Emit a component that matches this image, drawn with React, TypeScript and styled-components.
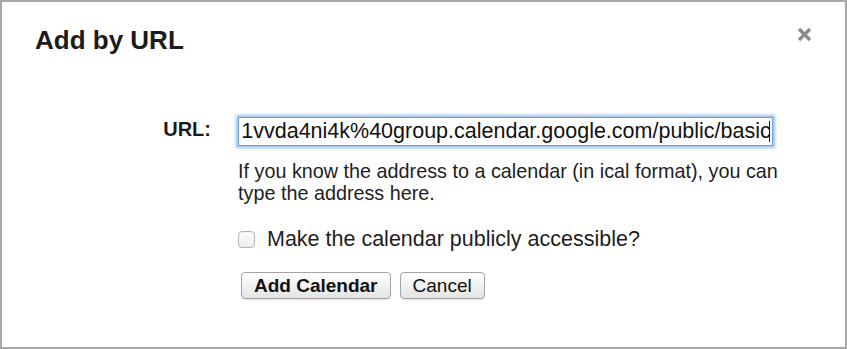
import { createGlobalStyle, styled } from "styled-components"

const GlobalStyle = createGlobalStyle`
  html, body {
    margin: 0;
    padding: 0;
    background: #ffffff;
  }
  body {
    font-family: "Liberation Sans", Arial, sans-serif;
    color: #1e1e1e;
  }
`

const S = {
  Dialog: styled.div`
    box-sizing: border-box;
    width: 847px;
    height: 349px;
    border: 2px solid #a8a8a8;
    background: #ffffff;
    display: flex;
    flex-direction: column;
  `,
  Header: styled.div`
    display: flex;
    justify-content: space-between;
    align-items: flex-start;
    padding: 23px 33px 0 33px;
  `,
  Title: styled.h1`
    margin: 0;
    font-size: 26px;
    line-height: 30px;
    font-weight: 700;
    color: #1c1c1c;
  `,
  Close: styled.button`
    margin-top: 2px;
    padding: 0;
    border: 0;
    background: none;
    width: 15px;
    height: 15px;
    display: flex;
    cursor: pointer;
  `,
  Form: styled.div`
    display: grid;
    grid-template-columns: 209px 535px;
    column-gap: 27px;
    margin-top: 62px;
  `,
  Label: styled.label`
    text-align: right;
    font-size: 20px;
    line-height: 24px;
    font-weight: 700;
    color: #1c1c1c;
  `,
  Field: styled.div`
    display: flex;
    flex-direction: column;
  `,
  UrlWrap: styled.div`
    position: relative;
    height: 29px;
  `,
  UrlInput: styled.input`
    box-sizing: border-box;
    width: 100%;
    height: 29px;
    margin: 0;
    padding: 0 1px 0 2px;
    border: 1px solid #6e9fd6;
    border-radius: 0;
    outline: none;
    box-shadow: 0 0 3px 2px rgba(120, 170, 225, 0.75);
    font-family: "Liberation Sans", Arial, sans-serif;
    font-size: 21.5px;
    color: #111111;
    background: #ffffff;
  `,
  Caret: styled.span`
    position: absolute;
    right: 3px;
    top: 4px;
    width: 1.5px;
    height: 21px;
    background: #111111;
  `,
  Help: styled.p`
    margin: 14px 0 0 0;
    width: 560px;
    font-size: 19.8px;
    line-height: 22px;
    color: #1e1e1e;
  `,
  CheckRow: styled.label`
    display: flex;
    align-items: center;
    gap: 12px;
    margin-top: 22px;
    font-size: 21.5px;
    line-height: 26px;
    color: #1e1e1e;
  `,
  CheckBox: styled.span`
    box-sizing: border-box;
    flex: none;
    width: 17px;
    height: 17px;
    border: 1px solid #b3b3b3;
    border-radius: 4px;
    background: linear-gradient(#ffffff, #ececec);
    box-shadow: inset 0 1px 1px rgba(0, 0, 0, 0.06);
  `,
  Actions: styled.div`
    display: flex;
    gap: 9px;
    margin-top: 20px;
    padding-left: 3px;
  `,
  Button: styled.button<{ $primary?: boolean }>`
    box-sizing: border-box;
    height: 27px;
    padding: 0 12px;
    border: 1px solid #a3a3a3;
    border-radius: 4px;
    background: linear-gradient(#ffffff, #f1f1f1 50%, #e4e4e4);
    box-shadow: 0 1px 1px rgba(0, 0, 0, 0.12);
    font-family: "Liberation Sans", Arial, sans-serif;
    font-size: 19px;
    line-height: 25px;
    font-weight: ${({ $primary }) => ($primary ? 700 : 400)};
    color: #111111;
    cursor: pointer;
  `,
}

const CloseIcon = () => (
  <svg width="15" height="15" viewBox="0 0 15 15">
    <path
      d="M2 2 L13 13 M13 2 L2 13"
      stroke="#8b8b8b"
      strokeWidth="3.4"
      strokeLinecap="butt"
    />
  </svg>
)

const URL_VALUE =
  "http://www.google.com/calendar/ical/ht8bq6hnq5ip1vvda4ni4k%40group.calendar.google.com/public/basic"

export default function App() {
  // the field is shown scrolled to its end, as after typing
  const scrollToEnd = (el: HTMLInputElement | null) => {
    if (el) el.scrollLeft = el.scrollWidth
  }

  return (
    <>
      <GlobalStyle />
      <S.Dialog>
        <S.Header>
          <S.Title>Add by URL</S.Title>
          <S.Close aria-label="Close">
            <CloseIcon />
          </S.Close>
        </S.Header>
        <S.Form>
          <S.Label htmlFor="cal-url">URL:</S.Label>
          <S.Field>
            <S.UrlWrap>
              <S.UrlInput
                id="cal-url"
                ref={scrollToEnd}
                defaultValue={URL_VALUE}
                readOnly
              />
              <S.Caret />
            </S.UrlWrap>
            <S.Help>
              If you know the address to a calendar (in ical format), you can
              type the address here.
            </S.Help>
            <S.CheckRow>
              <S.CheckBox />
              Make the calendar publicly accessible?
            </S.CheckRow>
            <S.Actions>
              <S.Button $primary>Add Calendar</S.Button>
              <S.Button>Cancel</S.Button>
            </S.Actions>
          </S.Field>
        </S.Form>
      </S.Dialog>
    </>
  )
}
